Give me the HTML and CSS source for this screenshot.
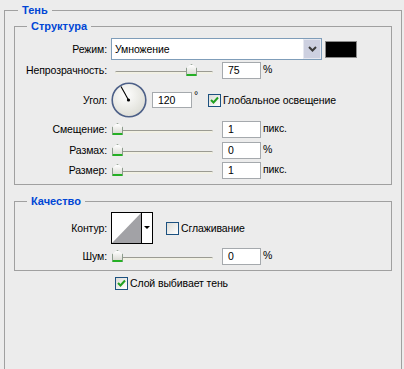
FILE: index.html
```html
<!DOCTYPE html>
<html lang="ru">
<head>
    <meta charset="UTF-8">
    <meta name="viewport" content="width=device-width, initial-scale=1.0">
    <title>Тень</title>
    <link rel="stylesheet" href="styles.css">
</head>
<body>
    <fieldset class="group outer">
        <legend>Тень</legend>

        <fieldset class="group structure">
            <legend>Структура</legend>

            <div class="row row-mode">
                <span class="caption">Режим:</span>
                <div class="select">
                    <span class="select-value">Умножение</span>
                    <span class="select-btn">
                        <svg width="9" height="6" viewBox="0 0 9 6"><path d="M1 1 L4.5 4.5 L8 1" fill="none" stroke="#3a3a3a" stroke-width="2"/></svg>
                    </span>
                </div>
                <span class="swatch"></span>
            </div>

            <div class="row row-opacity">
                <span class="caption">Непрозрачность:</span>
                <div class="slider">
                    <span class="track"></span>
                    <span class="thumb" style="left: 75px"></span>
                </div>
                <span class="field">75</span>
                <span class="unit">%</span>
            </div>

            <div class="row row-angle">
                <span class="caption">Угол:</span>
                <svg class="dial" width="36" height="36" viewBox="0 0 36 36">
                    <defs>
                        <radialGradient id="dialFill" cx="0.4" cy="0.35" r="0.7">
                            <stop offset="0" stop-color="#ffffff"/>
                            <stop offset="1" stop-color="#dcdcd4"/>
                        </radialGradient>
                    </defs>
                    <circle cx="18" cy="18" r="16.8" fill="url(#dialFill)" stroke="#4d6088" stroke-width="1.6"/>
                    <line x1="17.5" y1="18" x2="10" y2="4.5" stroke="#000" stroke-width="1.1"/>
                    <circle cx="17.5" cy="18" r="1.6" fill="#000"/>
                </svg>
                <span class="field field-angle">120</span>
                <span class="degree">°</span>
                <span class="check checked"></span>
                <span class="check-text">Глобальное освещение</span>
            </div>

            <div class="row row-distance">
                <span class="caption">Смещение:</span>
                <div class="slider">
                    <span class="track"></span>
                    <span class="thumb" style="left: 1px"></span>
                </div>
                <span class="field">1</span>
                <span class="unit">пикс.</span>
            </div>

            <div class="row row-spread">
                <span class="caption">Размах:</span>
                <div class="slider">
                    <span class="track"></span>
                    <span class="thumb" style="left: 1px"></span>
                </div>
                <span class="field">0</span>
                <span class="unit">%</span>
            </div>

            <div class="row row-size">
                <span class="caption">Размер:</span>
                <div class="slider">
                    <span class="track"></span>
                    <span class="thumb" style="left: 1px"></span>
                </div>
                <span class="field">1</span>
                <span class="unit">пикс.</span>
            </div>
        </fieldset>

        <fieldset class="group quality">
            <legend>Качество</legend>

            <div class="row row-contour">
                <span class="caption">Контур:</span>
                <div class="contour">
                    <svg class="contour-preview" width="29" height="30" viewBox="0 0 29 30">
                        <rect width="29" height="30" fill="#fff"/>
                        <polygon points="0,30 29,0 29,30" fill="#a2a2a6"/>
                    </svg>
                    <span class="contour-arrow"></span>
                </div>
                <span class="check check-aa"></span>
                <span class="check-text">Сглаживание</span>
            </div>

            <div class="row row-noise">
                <span class="caption">Шум:</span>
                <div class="slider">
                    <span class="track"></span>
                    <span class="thumb" style="left: 1px"></span>
                </div>
                <span class="field">0</span>
                <span class="unit">%</span>
            </div>
        </fieldset>

        <div class="row row-knockout">
            <span class="check checked"></span>
            <span class="check-text">Слой выбивает тень</span>
        </div>
    </fieldset>
</body>
</html>
```

FILE: styles.css
```css
body {
    margin: 0;
    width: 404px;
    height: 369px;
    overflow: hidden;
    background-color: #ececec;
    font-family: "Liberation Sans", Arial, sans-serif;
    font-size: 10.5px;
    letter-spacing: -0.1px;
    color: #000;
}

/* group boxes */
.group {
    border: 1px solid #a0a0a0;
    margin: 0;
    padding: 0;
    min-width: 0;
}
.group > legend {
    color: #0046d5;
    font-weight: bold;
    font-size: 11px;
    letter-spacing: 0;
    line-height: 14px;
    padding: 0 4px;
}
.outer {
    margin: 3px 2px 0 4px;
    height: 366px;
    box-sizing: border-box;
    border-bottom: none; /* cut off by the panel edge */
}
.outer > legend {
    margin-left: 13px;
}
.structure {
    margin: 2px 9px 0 9px;
    padding: 5px 0 5px 0;
}
.structure > legend,
.quality > legend {
    margin-left: 12px;
}
.quality {
    margin: 9px 9px 0 9px;
    padding: 4px 0 5px 0;
}

/* rows */
.row {
    display: flex;
    align-items: center;
    height: 18px;
}
.caption {
    width: 92px;
    margin-right: 4px;
    text-align: right;
    white-space: nowrap;
}
.row-mode { height: 22px; }
.row-opacity { margin-top: 1px; }
.row-angle { height: 36px; margin-top: 3px; }
.row-distance { margin-top: 2px; }
.row-spread { margin-top: 3px; }
.row-size { margin-top: 2px; }
.row-contour { height: 32px; }
.row-noise { margin-top: 3px; }
.row-knockout {
    height: 14px;
    margin-top: 5px;
    padding-left: 110px;
}

/* select */
.select {
    display: flex;
    align-items: stretch;
    width: 211px;
    height: 22px;
    box-sizing: border-box;
    border: 1px solid #7f9db9;
    background-color: #fff;
}
.select-value {
    flex: 1;
    padding-left: 3px;
    line-height: 20px;
}
.select-btn {
    width: 18px;
    display: flex;
    align-items: center;
    justify-content: center;
    background-color: #cdd0e0;
    border: 1px solid #e6e8f0;
    box-sizing: border-box;
}
.swatch {
    width: 32px;
    height: 17px;
    margin-left: 3px;
    box-sizing: border-box;
    border: 1px solid #8a8a8a;
    background-color: #000;
}

/* slider */
.slider {
    position: relative;
    width: 105px;
    height: 14px;
    margin-right: 6px;
}
.track {
    position: absolute;
    left: 4px;
    right: 3px;
    top: 8px;
    height: 3px;
    box-sizing: border-box;
    border-top: 1px solid #9b9b93;
    border-radius: 2px;
    background-color: #f1f0e4;
}
.thumb {
    position: absolute;
    top: 1px;
    width: 11px;
    height: 12px;
    box-sizing: border-box;
    border: 1px solid #8c9c8c;
    border-bottom: 2px solid #25b025;
    border-radius: 3px 3px 1px 1px;
    clip-path: polygon(50% 0, 100% 35%, 100% 100%, 0 100%, 0 35%);
    background: linear-gradient(#ffffff, #dcdcd6);
}

/* text fields */
.field {
    width: 39px;
    height: 17px;
    box-sizing: border-box;
    border: 1px solid #a5a9ad;
    background-color: #fff;
    padding-left: 5px;
    line-height: 15px;
}
.field-angle {
    width: 40px;
    height: 16px;
    margin-left: 5px;
    line-height: 14px;
}
.unit {
    margin-left: 2px;
    margin-top: -3px;
}
.degree {
    width: 16px;
    padding-left: 2px;
    box-sizing: border-box;
    align-self: flex-start;
    margin-top: 7px;
}

/* checkboxes */
.check {
    width: 13px;
    height: 13px;
    box-sizing: border-box;
    border: 1px solid #1c5180;
    background: linear-gradient(135deg, #dcdcd7, #ffffff);
}
.check.checked {
    background-image: url("data:image/svg+xml,%3Csvg xmlns='http://www.w3.org/2000/svg' width='11' height='11'%3E%3Cpath d='M2 5 L4.5 7.5 L9 2.5' fill='none' stroke='%2321a121' stroke-width='2'/%3E%3C/svg%3E"), linear-gradient(135deg, #dcdcd7, #ffffff);
}
.check-text {
    margin-left: 2px;
}
.check-aa {
    margin-left: 13px;
}

/* contour */
.contour {
    display: flex;
    width: 42px;
    height: 32px;
    box-sizing: border-box;
    border: 1px solid #000;
    background-color: #fff;
}
.contour-preview {
    display: block;
    border-right: 1px solid #000;
}
.contour-arrow {
    flex: 1;
    display: flex;
    align-items: center;
    justify-content: center;
}
.contour-arrow::before {
    content: "";
    border-left: 3px solid transparent;
    border-right: 3px solid transparent;
    border-top: 3px solid #000;
    margin-top: -2px;
}
```
